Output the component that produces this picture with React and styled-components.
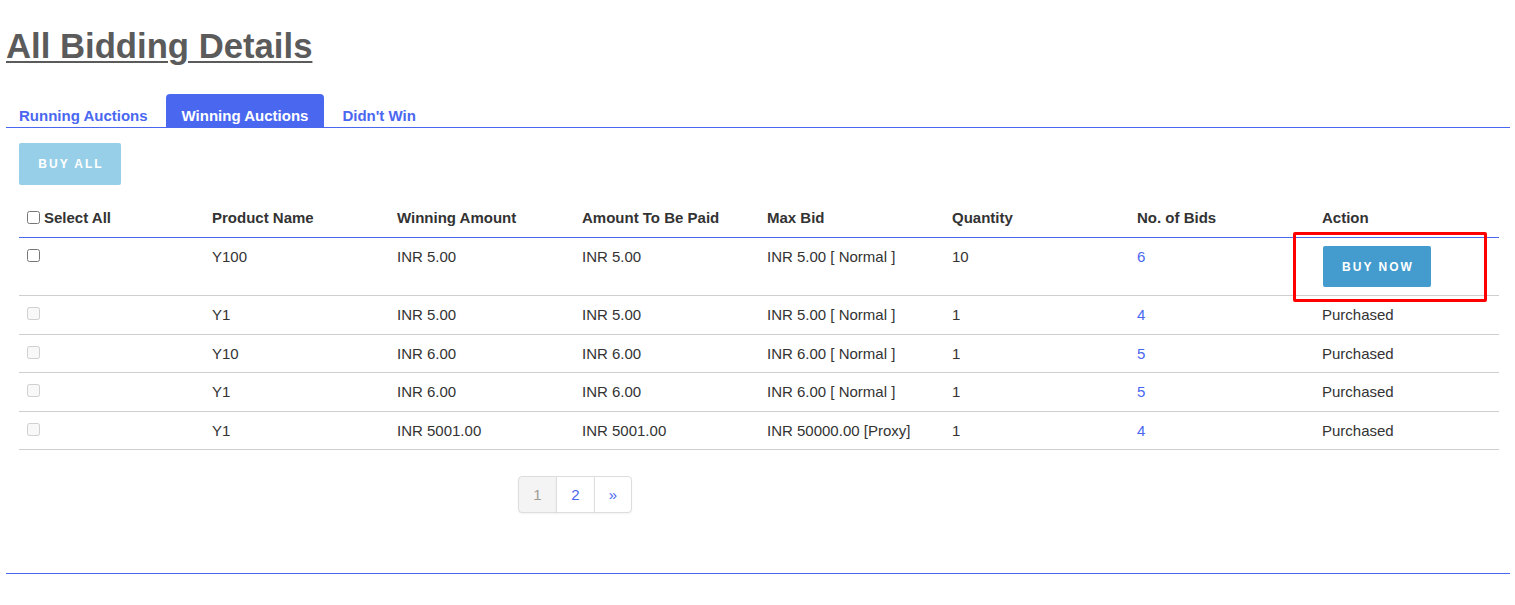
import React from "react"
import styled, {createGlobalStyle} from "styled-components"

const colors = {
    text: "#333333",
    heading: "#5b5b5b",
    blue: "#4a67f0",
    buyNow: "#439ccd",
    buyAll: "#97cfe8",
    rowLine: "#cfcfcf",
    red: "#ff0000",
}

const GlobalStyle = createGlobalStyle`
    body {
        margin: 0;
        background: #ffffff;
        font-family: "Liberation Sans", Arial, sans-serif;
        color: ${colors.text};
    }
`

const Page = styled.div`
    margin: 0 5px 0 6px;
    padding-top: 24px;
`

const Heading = styled.h1`
    margin: 0 0 26px;
    font-size: 34.7px;
    line-height: 44px;
    font-weight: 700;
    color: ${colors.heading};
    text-decoration: underline;
    text-decoration-thickness: 2px;
    text-underline-offset: 3px;
`

const TabBar = styled.div`
    display: flex;
    border-bottom: 1px solid ${colors.blue};
`

const TabList = styled.div`
    display: flex;
    gap: 2px;
    margin-left: -3px;
`

const Tab = styled.a`
    display: block;
    padding: 13px 16px 3px;
    line-height: 17px;
    font-size: 15px;
    font-weight: 700;
    border-radius: 4px 4px 0 0;
    cursor: pointer;
    color: ${p => (p.$active ? "#ffffff" : colors.blue)};
    background: ${p => (p.$active ? colors.blue : "transparent")};
`

const Content = styled.div`
    padding: 15px 11px 0 13px;
`

const ActionButton = styled.button`
    display: block;
    border: none;
    border-radius: 2px;
    color: #ffffff;
    font-family: inherit;
    font-weight: 700;
    font-size: 12px;
    letter-spacing: 2px;
    text-indent: 2px;
    text-transform: uppercase;
    cursor: pointer;
    background: ${p => p.$bg};
    width: ${p => p.$w}px;
    height: ${p => p.$h}px;
    padding: 0;
`

const Table = styled.table`
    width: 100%;
    margin-top: 14px;
    border-collapse: collapse;
    table-layout: fixed;
    font-size: 15px;
`

const Th = styled.th`
    text-align: left;
    vertical-align: top;
    padding: 8px;
    height: 22px;
    line-height: 22px;
    font-weight: 700;
    border-bottom: 1px solid ${colors.blue};
`

const Td = styled.td`
    text-align: left;
    vertical-align: top;
    padding: 8px;
    line-height: 21.5px;
    border-top: 1px solid ${colors.rowLine};
`

const Row = styled.tr`
    &:first-child td {
        border-top: none;
    }
    &:last-child td {
        border-bottom: 1px solid ${colors.rowLine};
    }
`

const HeadCheck = styled.label`
    display: flex;
    align-items: center;
    gap: 4px;
    height: 22px;

    input {
        margin: 0 0 1px;
        width: 13px;
        height: 13px;
    }
`

const RowCheck = styled.input`
    margin: 3px 0 0;
    width: 13px;
    height: 13px;
    vertical-align: top;
`

const BidLink = styled.a`
    color: ${colors.blue};
    text-decoration: none;
`

const Marked = styled.div`
    position: relative;
    width: 108px;
    margin-left: 1px;
`

const Highlight = styled.span`
    position: absolute;
    top: -14px;
    left: -30px;
    width: 194px;
    height: 70px;
    box-sizing: border-box;
    border: 3px solid ${colors.red};
    border-radius: 2px;
    pointer-events: none;
`

const Pagination = styled.ul`
    display: flex;
    list-style: none;
    margin: 26px 0 0 499px;
    padding: 0;
    font-size: 15px;
`

const PageItem = styled.li`
    box-sizing: border-box;
    width: 39px;
    height: 37px;
    display: flex;
    align-items: center;
    justify-content: center;
    border: 1px solid #dddddd;
    margin-left: -1px;
    color: ${p => (p.$active ? "#a09a92" : colors.blue)};
    background: ${p => (p.$active ? "#f4f4f4" : "#ffffff")};
    box-shadow: 0 1px 2px rgba(0, 0, 0, 0.05);

    &:first-child {
        margin-left: 0;
        border-radius: 4px 0 0 4px;
    }
    &:last-child {
        width: 38px;
        border-radius: 0 4px 4px 0;
    }
`

const Footer = styled.div`
    margin-top: 60px;
    border-top: 1px solid ${colors.blue};
`

const rows = [
    {name: "Y100", win: "INR 5.00", pay: "INR 5.00", max: "INR 5.00 [ Normal ]", qty: "10", bids: "6", open: true},
    {name: "Y1", win: "INR 5.00", pay: "INR 5.00", max: "INR 5.00 [ Normal ]", qty: "1", bids: "4"},
    {name: "Y10", win: "INR 6.00", pay: "INR 6.00", max: "INR 6.00 [ Normal ]", qty: "1", bids: "5"},
    {name: "Y1", win: "INR 6.00", pay: "INR 6.00", max: "INR 6.00 [ Normal ]", qty: "1", bids: "5"},
    {name: "Y1", win: "INR 5001.00", pay: "INR 5001.00", max: "INR 50000.00 [Proxy]", qty: "1", bids: "4"},
]

const App = () => {
    return (
        <Page>
            <GlobalStyle/>
            <Heading>All Bidding Details</Heading>

            <TabBar>
                <TabList>
                    <Tab>Running Auctions</Tab>
                    <Tab $active>Winning Auctions</Tab>
                    <Tab>Didn't Win</Tab>
                </TabList>
            </TabBar>

            <Content>
                <ActionButton $bg={colors.buyAll} $w={102} $h={42}>Buy All</ActionButton>

                <Table>
                    <thead>
                        <tr>
                            <Th>
                                <HeadCheck><input type="checkbox"/>Select All</HeadCheck>
                            </Th>
                            <Th>Product Name</Th>
                            <Th>Winning Amount</Th>
                            <Th>Amount To Be Paid</Th>
                            <Th>Max Bid</Th>
                            <Th>Quantity</Th>
                            <Th>No. of Bids</Th>
                            <Th>Action</Th>
                        </tr>
                    </thead>
                    <tbody>
                        {rows.map((row, i) => (
                            <Row key={i}>
                                <Td><RowCheck type="checkbox" disabled={!row.open}/></Td>
                                <Td>{row.name}</Td>
                                <Td>{row.win}</Td>
                                <Td>{row.pay}</Td>
                                <Td>{row.max}</Td>
                                <Td>{row.qty}</Td>
                                <Td><BidLink href="#">{row.bids}</BidLink></Td>
                                <Td>
                                    {row.open ? (
                                        <Marked>
                                            <ActionButton $bg={colors.buyNow} $w={108} $h={41}>Buy Now</ActionButton>
                                            <Highlight/>
                                        </Marked>
                                    ) : "Purchased"}
                                </Td>
                            </Row>
                        ))}
                    </tbody>
                </Table>

                <Pagination>
                    <PageItem $active>1</PageItem>
                    <PageItem>2</PageItem>
                    <PageItem>»</PageItem>
                </Pagination>
            </Content>

            <Footer/>
        </Page>
    )
}

export default App
